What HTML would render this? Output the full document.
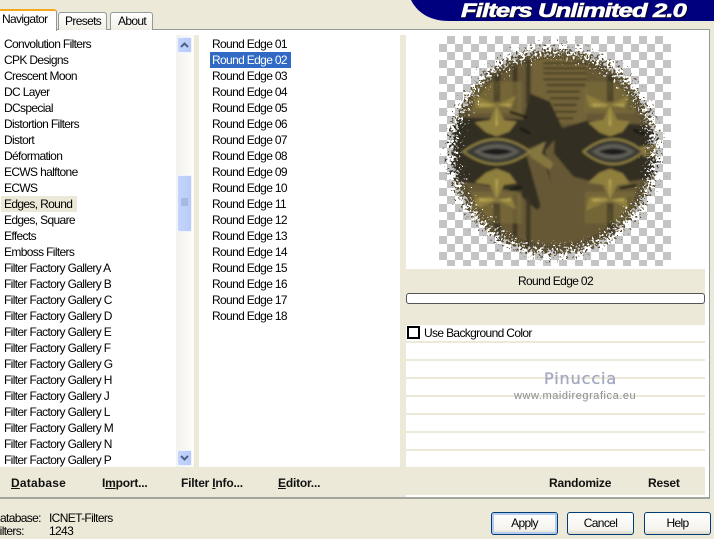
<!DOCTYPE html>
<html><head><meta charset="utf-8"><style>
html,body{margin:0;padding:0}
body{width:714px;height:539px;position:relative;overflow:hidden;background:#ECE9D8;font-family:"Liberation Sans",sans-serif;font-size:12px;letter-spacing:-.65px;color:#000}
.a{position:absolute}
.t{position:absolute;white-space:nowrap;line-height:16px}
.b{font-weight:bold;letter-spacing:-.2px;font-size:12px;color:#111;white-space:nowrap;position:absolute;line-height:16px}
.btn{position:absolute;top:512px;width:65px;height:21px;border:1px solid #003C74;border-radius:3px;background:linear-gradient(#fff,#f4f3ee 80%,#dcd8c8);text-align:center;line-height:21px}
.sb{position:absolute;left:177px;width:15px;background:linear-gradient(90deg,#c3d5fb,#b8cbf8);border:1px solid #eef3ff;box-sizing:border-box;border-radius:2px}
.ln{position:absolute;left:406px;width:299px;height:2px;background:#ECE9D8}
</style></head><body>
<div class="a" style="left:0;top:29px;width:710px;height:470px;background:#fff;border-top:1px solid #919B9C;border-right:1px solid #919B9C;border-bottom:2px solid #a3a69e;box-sizing:border-box"></div>
<div class="a" style="left:0;top:9px;width:57px;height:22px;background:#fff;border-top:2px solid #F5A623;border-right:1px solid #919B9C;box-sizing:border-box;border-radius:0 3px 0 0"></div>
<div class="a" style="left:58px;top:12px;width:49px;height:18px;background:linear-gradient(#fff,#f0efe6);border:1px solid #919B9C;border-bottom:0;box-sizing:border-box;border-radius:3px 3px 0 0"></div>
<div class="a" style="left:110px;top:12px;width:43px;height:18px;background:linear-gradient(#fff,#f0efe6);border:1px solid #919B9C;border-bottom:0;box-sizing:border-box;border-radius:3px 3px 0 0"></div>
<div class="t" style="left:2px;top:11px">Navigator</div>
<div class="t" style="left:65px;top:13px">Presets</div>
<div class="t" style="left:118px;top:13px">About</div>

<!-- logo -->
<svg class="a" style="left:405px;top:0" width="309" height="24"><path d="M6 0H309V21H44C24 21 12 12 6 0Z" fill="#00007F"/><text x="56.5" y="17.5" font-family="Liberation Sans" font-weight="bold" font-style="italic" font-size="19" fill="#000" textLength="225" lengthAdjust="spacingAndGlyphs" stroke="#000" stroke-width="1">Filters Unlimited 2.0</text><text x="56" y="17" font-family="Liberation Sans" font-weight="bold" font-style="italic" font-size="19" fill="#fff" textLength="225" lengthAdjust="spacingAndGlyphs" stroke="#fff" stroke-width=".6">Filters Unlimited 2.0</text></svg>

<!-- separators -->
<div class="a" style="left:176px;top:35px;width:18px;height:432px;background:linear-gradient(90deg,#f3f2ec,#fdfdfb)"></div>
<div class="a" style="left:194px;top:35px;width:5px;height:432px;background:#ECE9D8"></div>
<div class="a" style="left:400px;top:35px;width:6px;height:432px;background:#ECE9D8"></div>
<div class="a" style="left:0;top:467px;width:406px;height:30px;background:#ECE9D8"></div>

<!-- scrollbar -->
<div class="sb" style="top:37px;height:16px"><svg width="13" height="14" style="display:block"><path d="M3 9L6.5 5.5L10 9" fill="none" stroke="#4d6185" stroke-width="2"/></svg></div>
<div class="sb" style="top:175px;height:57px"><svg width="13" height="55" style="display:block"><path d="M3 23H10M3 25H10M3 27H10M3 29H10" stroke="#8ea3cf"/></svg></div>
<div class="sb" style="top:450px;height:16px"><svg width="13" height="14" style="display:block"><path d="M3 5L6.5 8.5L10 5" fill="none" stroke="#4d6185" stroke-width="2"/></svg></div>

<!-- list 1 -->
<div class="a" style="left:1px;top:196px;width:76px;height:16px;background:#ECE9D8"></div>
<div class="t" style="left:4px;top:36px">Convolution Filters<br>CPK Designs<br>Crescent Moon<br>DC Layer<br>DCspecial<br>Distortion Filters<br>Distort<br>Déformation<br>ECWS halftone<br>ECWS<br>Edges, Round<br>Edges, Square<br>Effects<br>Emboss Filters<br>Filter Factory Gallery A<br>Filter Factory Gallery B<br>Filter Factory Gallery C<br>Filter Factory Gallery D<br>Filter Factory Gallery E<br>Filter Factory Gallery F<br>Filter Factory Gallery G<br>Filter Factory Gallery H<br>Filter Factory Gallery J<br>Filter Factory Gallery L<br>Filter Factory Gallery M<br>Filter Factory Gallery N<br>Filter Factory Gallery P</div>

<!-- list 2 -->
<div class="a" style="left:210px;top:52px;width:81px;height:16px;background:#316AC5"></div>
<div class="t" style="left:212px;top:36px">Round Edge 01<br><span style="color:#fff">Round Edge 02</span><br>Round Edge 03<br>Round Edge 04<br>Round Edge 05<br>Round Edge 06<br>Round Edge 07<br>Round Edge 08<br>Round Edge 09<br>Round Edge 10<br>Round Edge 11<br>Round Edge 12<br>Round Edge 13<br>Round Edge 14<br>Round Edge 15<br>Round Edge 16<br>Round Edge 17<br>Round Edge 18</div>

<!-- preview -->
<svg class="a" style="left:430px;top:30px" width="250" height="240" viewBox="0 0 750 720">
<defs>
<pattern id="c" x="27" y="18" width="48" height="48" patternUnits="userSpaceOnUse"><rect width="48" height="48" fill="#fff"/><rect x="24" width="24" height="24" fill="#c4c4c4"/><rect y="24" width="24" height="24" fill="#c4c4c4"/></pattern>
<filter id="rough" filterUnits="userSpaceOnUse" x="0" y="0" width="750" height="720"><feTurbulence type="fractalNoise" baseFrequency="0.14" numOctaves="2" seed="7"/><feDisplacementMap in="SourceGraphic" scale="130" xChannelSelector="R" yChannelSelector="G"/></filter>
<mask id="m" maskUnits="userSpaceOnUse" x="0" y="0" width="750" height="720"><circle cx="370" cy="365" r="302" fill="#fff" filter="url(#rough)"/></mask>
<filter id="bl" x="-5%" y="-5%" width="110%" height="110%"><feGaussianBlur stdDeviation="3.5"/></filter>
<g id="f"><path d="M-75 -70H75V25H-75Z" fill="#7b6c3a" opacity=".7"/><path d="M0 0L-72 -32L-62 8L-15 10ZM0 0L58 -28L44 8ZM0 0L-20 45L-66 52L-32 82L0 94L38 80L60 50L22 45Z" fill="#8f7f3e"/><path d="M0 0L-5 -70L5 -70ZM0 0L-4 62L4 62ZM0 0L-52 -5L-52 5ZM0 0L42 -4L42 4Z" fill="#b5a652"/><path d="M-9 -90H9V-10H-9Z" fill="#3c3522" opacity=".75"/></g>
</defs>
<rect x="27" y="18" width="696" height="690" fill="url(#c)"/>
<g mask="url(#m)"><rect width="750" height="720" fill="#665935"/><g filter="url(#bl)">
<rect width="750" height="720" fill="#665935"/>
<path d="M300 70H470V280H300Z" fill="#736439"/>
<path d="M0 360L90 262L280 268L300 190L360 215L400 300L345 362L372 505L320 540L260 485L130 460L0 440Z" fill="#302e24"/>
<path d="M375 300L470 272L650 285L750 370L660 445L520 465L430 440L372 370Z" fill="#302e24"/>
<path d="M285 360L350 335L335 365L375 500L460 470L430 600L340 640L330 520Z" fill="#665935"/>
<path d="M300 360L345 335L335 370L370 400L360 420L300 380Z" fill="#857640"/>
<g stroke="#3a3424" fill="none" opacity=".85"><path d="M205 130V200M255 110V240M295 90V220M205 530V640M255 490V620M295 500V660M545 140V210M600 160V240M545 520V620M600 500V600" stroke-width="14"/></g>
<path d="M340 100H470M340 115H470M340 130H470M340 148H470M350 165H470M350 185H450M360 205H450M370 225H440M375 245H440M380 265H430" stroke="#37301f" stroke-width="5"/>
<use href="#f" transform="translate(200,225)"/><use href="#f" transform="translate(540,225)"/>
<use href="#f" transform="translate(200,510) scale(1,-1)"/><use href="#f" transform="translate(540,510) scale(1,-1)"/>
<path d="M100 365Q200 290 300 365Q200 440 100 365Z" fill="#3b3b36" stroke="#8f8040" stroke-width="6"/>
<path d="M130 365Q200 320 270 365Q200 410 130 365Z" fill="#5e5d56"/><path d="M150 365Q200 345 250 365Q200 385 150 365Z" fill="#1f1e1a"/>
<path d="M460 365Q550 290 640 365Q550 440 460 365Z" fill="#3b3b36" stroke="#8f8040" stroke-width="6"/>
<path d="M485 365Q550 320 615 365Q550 410 485 365Z" fill="#5e5d56"/><path d="M505 365Q550 345 595 365Q550 385 505 365Z" fill="#1f1e1a"/>
<path d="M630 350L690 340L680 380L640 380Z" fill="#857640"/>
<path d="M240 245L290 262M270 295L300 310M610 300L650 315M570 475L620 465M240 480L275 470" stroke="#15140f" stroke-width="7"/>
</g>
<circle cx="370" cy="365" r="306" fill="none" stroke="#37352b" stroke-width="56" stroke-dasharray="3 4" opacity=".6"/>
</g>
</svg>

<!-- right bottom -->
<div class="a" style="left:406px;top:269px;width:299px;height:56px;background:#ECE9D8"></div>
<div class="t" style="left:406px;width:299px;text-align:center;top:273px">Round Edge 02</div>
<div class="a" style="left:406px;top:293px;width:299px;height:11px;box-sizing:border-box;background:#fff;border:1px solid #555;border-radius:3px"></div>
<div class="a" style="left:407px;top:326px;width:13px;height:13px;box-sizing:border-box;border:2px solid #000;background:#fff"></div>
<div class="t" style="left:424px;top:325px">Use Background Color</div>
<div class="ln" style="top:341px"></div><div class="ln" style="top:359px"></div><div class="ln" style="top:377px"></div><div class="ln" style="top:395px"></div><div class="ln" style="top:413px"></div><div class="ln" style="top:431px"></div><div class="ln" style="top:449px"></div>
<div class="a" style="left:406px;top:467px;width:299px;height:28px;background:#ECE9D8"></div>

<div class="t" style="left:544px;top:368px;letter-spacing:.9px;color:#a5a8c2;line-height:22px;font-family:'DejaVu Sans',sans-serif;font-size:16px;-webkit-text-stroke:.35px #a5a8c2">Pinuccia</div>
<div class="t" style="left:514px;top:388px;font-size:11px;letter-spacing:.55px;color:#8b8b93">www.maidiregrafica.eu</div>

<!-- bottom bar -->
<div class="b" style="left:11px;top:475px;letter-spacing:.2px"><u>D</u>atabase</div>
<div class="b" style="left:102px;top:475px">I<u>m</u>port...</div>
<div class="b" style="left:181px;top:475px">Filter <u>I</u>nfo...</div>
<div class="b" style="left:278px;top:475px"><u>E</u>ditor...</div>
<div class="b" style="left:549px;top:475px">Randomize</div>
<div class="b" style="left:648px;top:475px">Reset</div>

<div class="t" style="left:-8px;top:510px">Database:</div>
<div class="t" style="left:49px;top:510px">ICNET-Filters</div>
<div class="t" style="left:-7px;top:523px">Filters:</div>
<div class="t" style="left:49px;top:523px">1243</div>

<div class="btn" style="left:491px;box-shadow:inset 0 0 0 2px #b5cbef">Apply</div>
<div class="btn" style="left:567px">Cancel</div>
<div class="btn" style="left:644px">Help</div>
</body></html>
